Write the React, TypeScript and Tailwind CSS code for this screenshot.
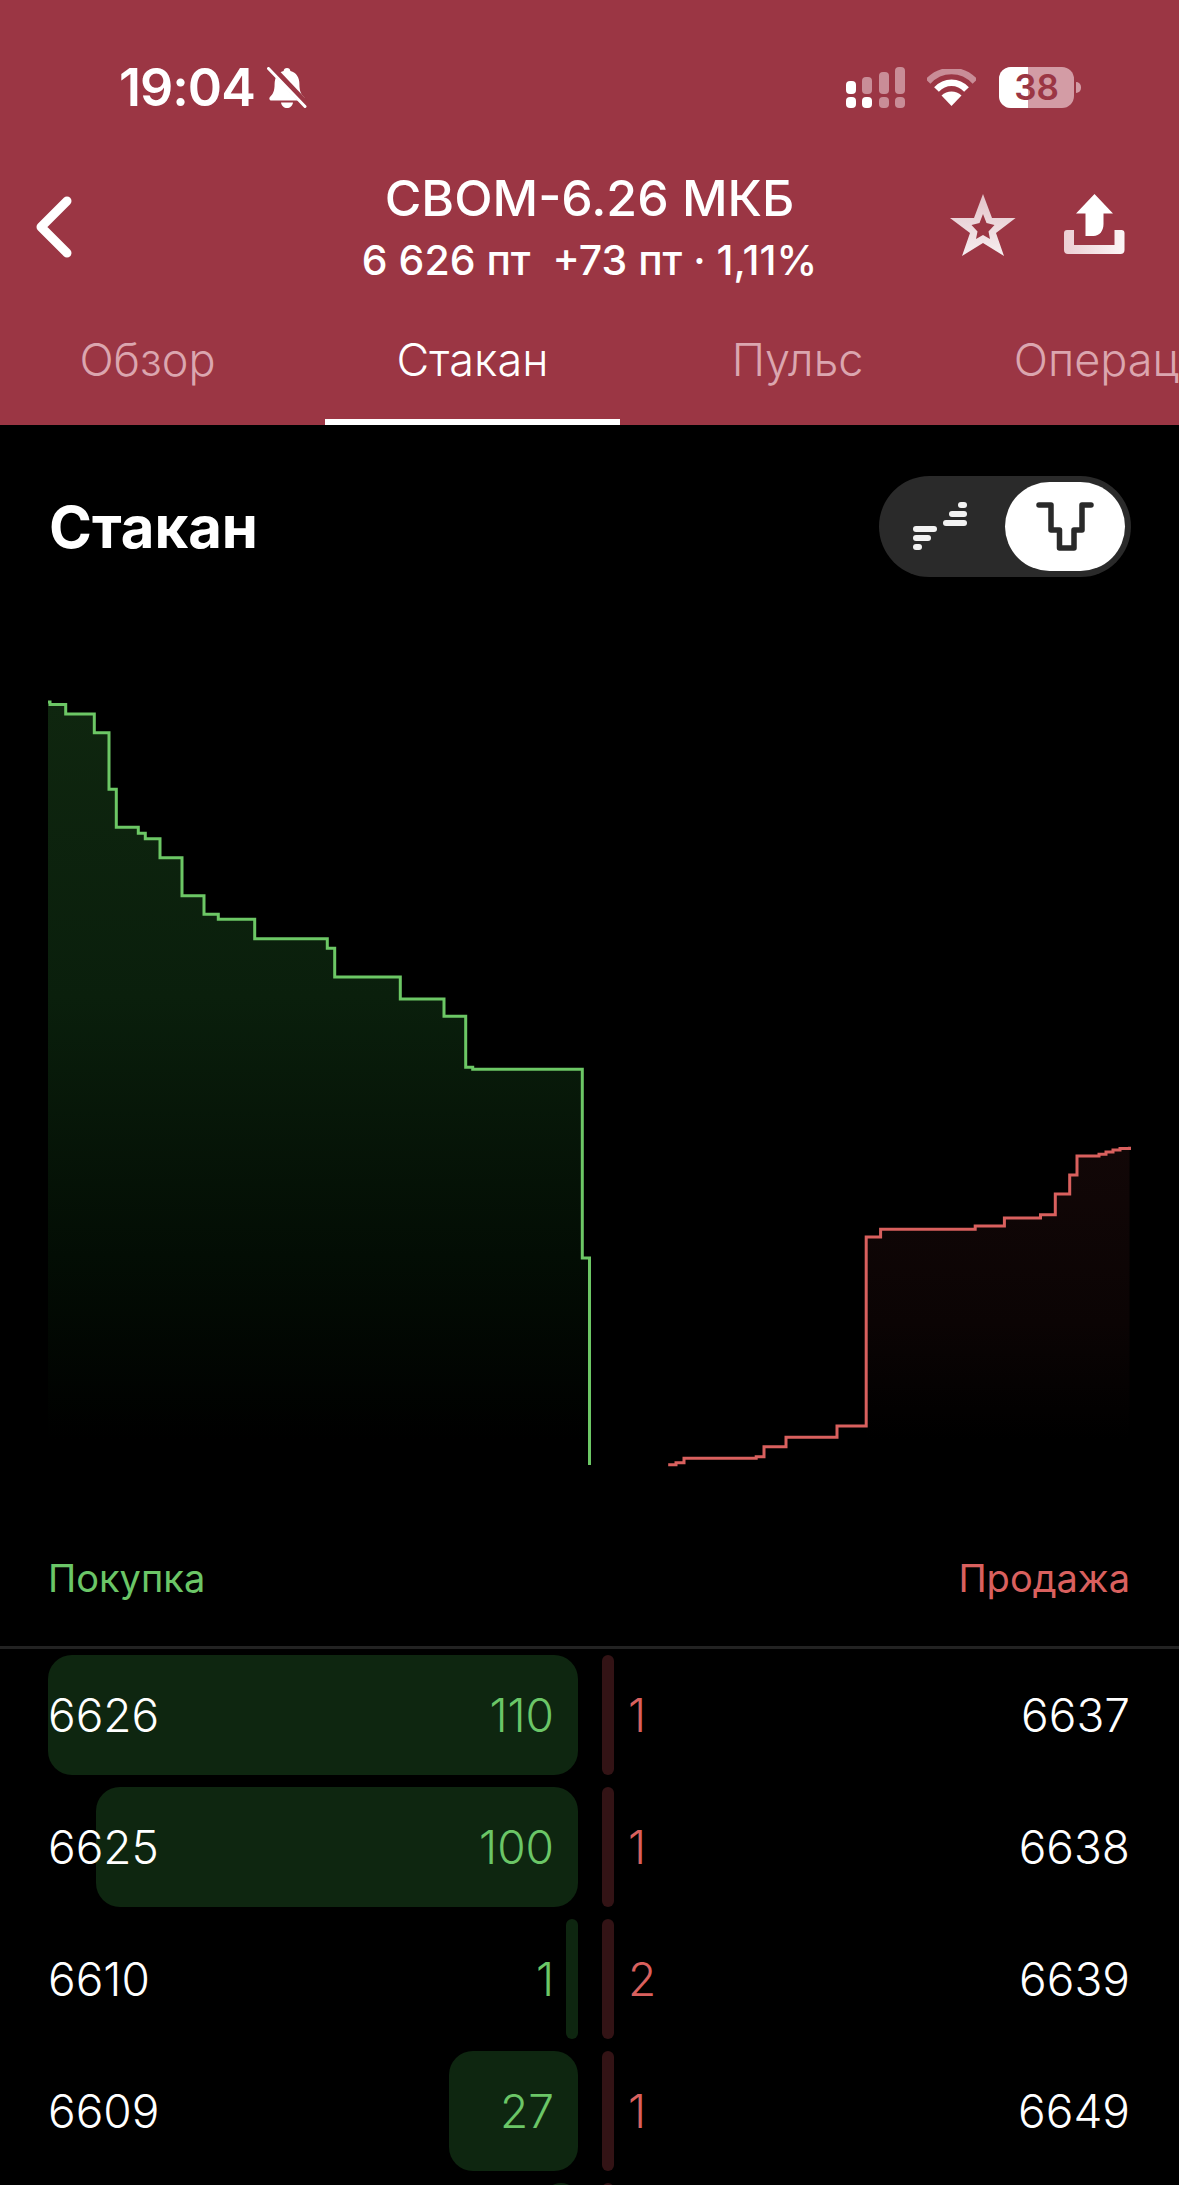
const HEADER = "#9b3644";

const greenLine =
  "48,702 50,702 50,704.5 65.7,704.5 65.7,714 94.3,714 94.3,732.7 109,732.7 109,789.3 116.3,789.3 116.3,827.3 138.3,827.3 138.3,833.3 145.3,833.3 145.3,838.7 160,838.7 160,857.7 182,857.7 182,895.7 204,895.7 204,914.3 218.3,914.3 218.3,919.3 254.7,919.3 254.7,938.7 327.3,938.7 327.3,948.3 334.7,948.3 334.7,977 400.3,977 400.3,999 444,999 444,1016.3 465.7,1016.3 465.7,1067.3 472.7,1067.3 472.7,1069.3 582.3,1069.3 582.3,1258 589.5,1258 589.5,1465";
const redLine =
  "668.2,1464.7 676,1464.7 676,1462.7 684,1462.7 684,1458.3 756.2,1458.3 756.2,1456.7 764,1456.7 764,1446.7 786,1446.7 786,1437.3 837,1437.3 837,1426 866.2,1426 866.2,1237 880.6,1237 880.6,1229.3 975.2,1229.3 975.2,1226 1004.4,1226 1004.4,1218 1040.5,1218 1040.5,1214.7 1055.3,1214.7 1055.3,1194 1069.7,1194 1069.7,1175 1077,1175 1077,1156 1099,1156 1099,1154.3 1106,1154.3 1106,1152 1113,1152 1113,1150 1120,1150 1120,1148.5 1129.5,1148.5 1129.5,1146.7";

const rows = [
  { buy: "6626", qty: "110", bar: "w-[530px]", sell: "1", price: "6637" },
  { buy: "6625", qty: "100", bar: "w-[482px]", sell: "1", price: "6638" },
  { buy: "6610", qty: "1", bar: "w-[12px]", sell: "2", price: "6639" },
  { buy: "6609", qty: "27", bar: "w-[129px]", sell: "1", price: "6649" },
  { buy: "", qty: "", bar: "w-[34px]", sell: "", price: "" },
];

function Bell() {
  return (
    <svg width="40" height="42" viewBox="0 0 40 42" className="block">
      <path d="M20 1c2 0 3.200 1.300 3.400 3 6 1.500 9 6.500 9 13 0 7 1.600 10 4.600 13 1.300 1.300.5 3.500-1.500 3.500H4.500c-2 0-2.800-2.200-1.500-3.500 3-3 4.600-6 4.600-13 0-6.500 3-11.500 9-13 .2-1.700 1.400-3 3.400-3z" fill="#fff" />
      <path d="M14 35.500h12c-.5 3.500-3 5.500-6 5.500s-5.500-2-6-5.500z" fill="#fff" />
      <line x1="3" y1="-1" x2="40" y2="38" stroke={HEADER} strokeWidth="7" />
      <line x1="1.500" y1="1.500" x2="38" y2="39.500" stroke="#fff" strokeWidth="3" strokeLinecap="round" />
    </svg>
  );
}

function Signal() {
  const pale = "#c98d97";
  const cols = [
    { x: 0, top: 14, h: 13, upper: "#fff", lower: "#fff" },
    { x: 16, top: 10, h: 17, upper: pale, lower: "#fff" },
    { x: 33, top: 5, h: 22, upper: pale, lower: pale },
    { x: 49, top: 0, h: 27, upper: pale, lower: pale },
  ];
  return (
    <svg width="59" height="41" viewBox="0 0 59 41" className="block">
      {cols.map((c) => (
        <g key={c.x}>
          <rect x={c.x} y={c.top} width="10" height={c.h} rx="4" fill={c.upper} />
          <rect x={c.x} y="30" width="10" height="11" rx="4" fill={c.lower} />
        </g>
      ))}
    </svg>
  );
}

function Wifi() {
  return (
    <svg width="49" height="37" viewBox="0 0 49 37" className="block">
      <path d="M1 12.500C14 -1.500 35 -1.500 48 12.500" fill="none" stroke="#c98d97" strokeWidth="6.500" />
      <path d="M9.500 20.500C18 11.500 31 11.500 39.500 20.500" fill="none" stroke="#fff" strokeWidth="6.500" />
      <path d="M14.500 26.500c5.500-5.500 14.500-5.500 20 0L24.500 37z" fill="#fff" />
    </svg>
  );
}

function Battery() {
  return (
    <div className="flex items-center gap-[2px]">
      <div className="relative w-[75px] h-[41px] rounded-[12px] bg-[#d39ca5] overflow-hidden flex items-center justify-center">
        <div className="absolute left-0 inset-y-0 w-[29px] bg-white" />
        <span className="relative text-[35px] leading-none font-semibold text-[#9b3644]">38</span>
      </div>
      <div className="w-[5px] h-[11px] rounded-r-full bg-[#d39ca5]" />
    </div>
  );
}

function Chevron() {
  return (
    <svg width="36" height="62" viewBox="0 0 36 62" className="block">
      <path d="M31 5L5 31l26 26" fill="none" stroke="#fff" strokeWidth="9" strokeLinecap="round" strokeLinejoin="round" />
    </svg>
  );
}

function Star() {
  return (
    <svg width="66" height="62" viewBox="951 195 66 62" className="block">
      <defs>
        <linearGradient id="starG" x1="0" y1="0" x2="0" y2="1">
          <stop offset="0" stopColor="#e3c3c9" />
          <stop offset="1" stopColor="#f6eef0" />
        </linearGradient>
      </defs>
      <path
        fillRule="evenodd"
        fill="url(#starG)"
        d="M984 195L993 219 1016.600 219 997 234 1005 257 984 244 963 257 971 234 951 219 975 219Z M984 215L980.500 224 972.500 226 978.500 232.500 977 240 984 236 991 240 989.500 232.500 995.500 226 987.500 224Z"
      />
    </svg>
  );
}

function Share() {
  return (
    <svg width="61" height="60" viewBox="1064.500 194 61 60" className="block">
      <defs>
        <linearGradient id="shareG" x1="0" y1="0" x2="1" y2="0">
          <stop offset="0" stopColor="#eccfd4" />
          <stop offset="1" stopColor="#fbf5f6" />
        </linearGradient>
      </defs>
      <path d="M1095 194L1113.500 213.500 1104 213.500 1104 224C1104 231 1100 236 1094 236L1086 236 1086 213.500 1076.500 213.500Z" fill="#fff" />
      <path d="M1064.500 233c0-1.800 1.200-3 3-3h7v15h40.500v-15h7c1.800 0 3 1.200 3 3v17c0 2.500-1.500 4-4 4h-52.500c-2.500 0-4-1.500-4-4z" fill="url(#shareG)" />
    </svg>
  );
}

function ToggleLeftIcon() {
  return (
    <svg width="56" height="49" viewBox="0 0 56 49" className="block">
      <g fill="#f2f2f2">
        <rect x="0" y="24" width="24" height="6" rx="3" />
        <rect x="0" y="33" width="18" height="6" rx="3" />
        <rect x="0" y="42" width="9" height="6" rx="3" />
        <rect x="30" y="18" width="24" height="6" rx="3" />
        <rect x="36" y="9" width="18" height="6" rx="3" />
        <rect x="45" y="0" width="9" height="6" rx="3" />
      </g>
    </svg>
  );
}

function ToggleRightIcon() {
  return (
    <svg width="58" height="50" viewBox="0 0 58 50" className="block">
      <path
        d="M3 3H15V28H23.500V46H38V28H46V3H55"
        fill="none"
        stroke="#2a2a2a"
        strokeWidth="5.500"
        strokeLinecap="round"
        strokeLinejoin="round"
      />
    </svg>
  );
}

function DepthChart() {
  return (
    <svg width="1179" height="800" viewBox="0 680 1179 800" className="block">
      <defs>
        <linearGradient id="gFill" gradientUnits="userSpaceOnUse" x1="0" y1="702" x2="0" y2="1440">
          <stop offset="0" stopColor="#0f260f" />
          <stop offset="0.4" stopColor="#0a1f0c" />
          <stop offset="0.75" stopColor="#030d04" />
          <stop offset="1" stopColor="#000" />
        </linearGradient>
        <linearGradient id="rFill" gradientUnits="userSpaceOnUse" x1="0" y1="1146" x2="0" y2="1440">
          <stop offset="0" stopColor="#120707" />
          <stop offset="0.6" stopColor="#0b0404" />
          <stop offset="1" stopColor="#000" />
        </linearGradient>
      </defs>
      <polygon points={`${greenLine} 48,1465`} fill="url(#gFill)" />
      <polygon points={`${redLine} 1129.500,1465 866.200,1465 866.200,1426`} fill="url(#rFill)" />
      <polyline points={greenLine} fill="none" stroke="#6cc765" strokeWidth="3" />
      <polyline points={redLine} fill="none" stroke="#d9605e" strokeWidth="3" />
    </svg>
  );
}

export default function App() {
  return (
    <div
      className="w-[1179px] h-[2185px] overflow-hidden bg-black text-white"
      style={{ fontFamily: "Inter, 'Noto Sans', sans-serif" }}
    >
      <header className="h-[425px] bg-[#9b3644] flex flex-col overflow-hidden">
        <div className="mt-[67px] h-[41px] flex items-center justify-between pl-[119px] pr-[98px]">
          <div className="flex items-center gap-[12px]">
            <span className="text-[52px] leading-none font-semibold tracking-[-1px]">19:04</span>
            <Bell />
          </div>
          <div className="flex items-center">
            <Signal />
            <div className="ml-[22px] mr-[23px]">
              <Wifi />
            </div>
            <Battery />
          </div>
        </div>

        <div className="mt-[61px] grid grid-cols-[1fr_auto_1fr] items-start">
          <div className="pl-[36px] pt-[27px]">
            <Chevron />
          </div>
          <div className="flex flex-col items-center">
            <div className="text-[50px] leading-[58px] font-medium">CBOM-6.26 МКБ</div>
            <div className="mt-[11px] text-[41px] leading-[44px] font-medium whitespace-pre">6 626 пт  +73 пт · 1,11%</div>
          </div>
          <div className="flex justify-end items-start gap-[48px] pr-[54px] pt-[25px]">
            <Star />
            <Share />
          </div>
        </div>

        <div className="mt-auto flex gap-[30px] w-[1300px] text-[45px] leading-[60px] font-light">
          {["Обзор", "Стакан", "Пульс", "Операции"].map((t, i) => (
            <div
              key={t}
              className={
                i === 1
                  ? "w-[295px] shrink-0 text-center h-[95px] border-b-[6px] border-white text-white"
                  : "w-[295px] shrink-0 text-center h-[95px] text-[#dba6af]"
              }
            >
              {t}
            </div>
          ))}
        </div>
      </header>

      <section className="flex items-center justify-between pl-[49px] pr-[48px] pt-[51px]">
        <h1 className="text-[58px] leading-none font-bold">Стакан</h1>
        <div className="w-[252px] h-[101px] rounded-full bg-[#2a2a2a] flex items-center justify-between pl-[34px] pr-[6px]">
          <ToggleLeftIcon />
          <div className="w-[120px] h-[89px] rounded-full bg-white flex items-center justify-center">
            <ToggleRightIcon />
          </div>
        </div>
      </section>

      <div className="mt-[103px]">
        <DepthChart />
      </div>

      <div className="mt-[74px] h-[95px] flex justify-between pl-[48px] pr-[49px] text-[38px] leading-[48px] border-b-[3px] border-[#222]">
        <span className="text-[#6bc667]">Покупка</span>
        <span className="text-[#d9605e]">Продажа</span>
      </div>

      <div className="mt-[6px] flex flex-col gap-[12px]">
        {rows.map((r, i) => (
          <div key={i} className="h-[120px] flex pl-[48px] pr-[49px] text-[46px] font-light">
            <div className="relative w-[530px] flex items-center justify-between pr-[24px]">
              <div className={`absolute right-0 inset-y-0 ${r.bar} rounded-[24px] bg-[#0e2610]`} />
              <span className="relative">{r.buy}</span>
              <span className="relative text-[#6bc667]">{r.qty}</span>
            </div>
            <div className="ml-[24px] w-[12px] rounded-full bg-[#331315]" />
            <div className="flex-1 flex items-center justify-between pl-[14px]">
              <span className="text-[#d9605e]">{r.sell}</span>
              <span>{r.price}</span>
            </div>
          </div>
        ))}
      </div>
    </div>
  );
}
